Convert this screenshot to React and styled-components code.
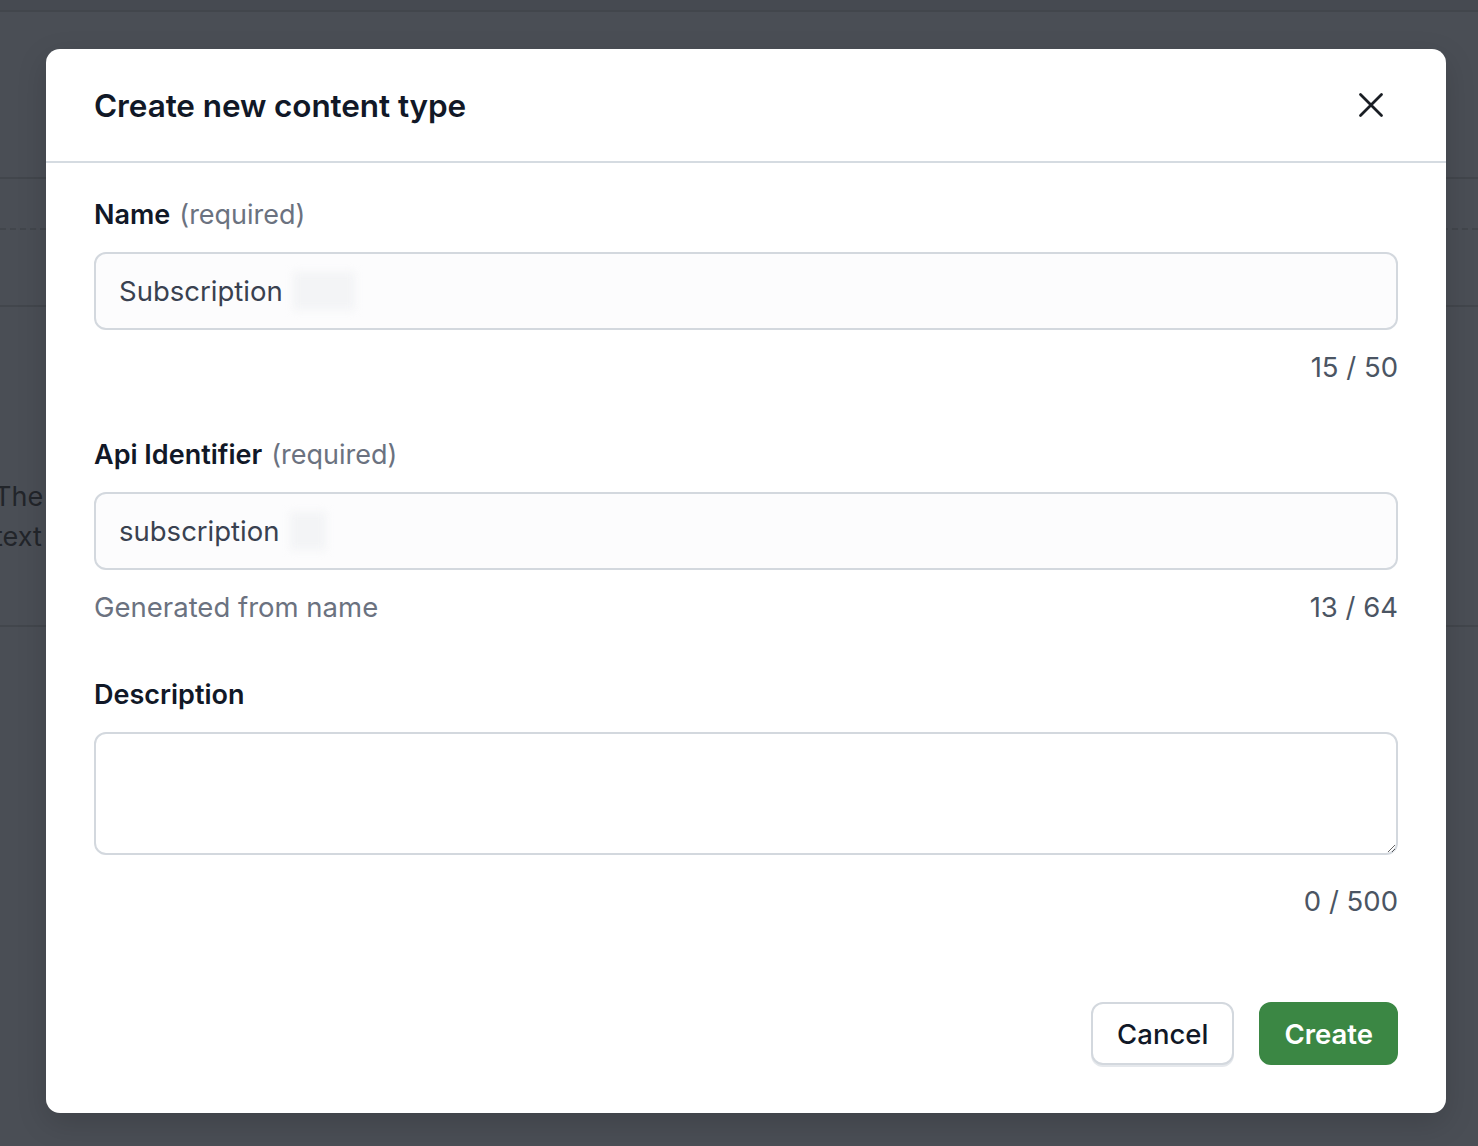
import React, { useState } from 'react';
import styled, { createGlobalStyle } from 'styled-components';

const GlobalStyle = createGlobalStyle`
  html, body {
    margin: 0;
    padding: 0;
    background: #4a4e55;
    font-family: Inter, "Noto Sans", "Liberation Sans", sans-serif;
    overflow: hidden;
  }
`;

const Backdrop = styled.div`
  position: relative;
  width: 1478px;
  height: 1146px;
  background: #4a4e55;
  overflow: hidden;
`;

const PageTop = styled.div`
  height: 10px;
  background: #464a51;
  border-bottom: 2px solid #42464c;
`;

const PageRow = styled.div`
  height: ${(p) => p.h}px;
  border-bottom: 2px ${(p) => (p.dashed ? 'dashed' : 'solid')} #42464c;
`;

const PageText = styled.div`
  height: ${(p) => p.h}px;
  box-sizing: border-box;
  padding-top: 170px;
  border-bottom: 2px solid #42464c;
  display: flex;
  flex-direction: column;
  margin-left: -6px;
  font-size: 27px;
  line-height: 40px;
  color: #22252a;
`;

const Modal = styled.div`
  position: absolute;
  left: 46px;
  top: 49px;
  width: 1400px;
  background: #ffffff;
  border-radius: 14px;
  overflow: hidden;
  box-shadow: 0 10px 30px rgba(0, 0, 0, 0.15);
`;

const Header = styled.div`
  height: 112px;
  display: flex;
  align-items: center;
  justify-content: space-between;
  padding: 0 48px;
  border-bottom: 2px solid #d5dbe1;
`;

const Title = styled.h2`
  margin: 0;
  font-size: 31.5px;
  font-weight: 600;
  color: #111827;
  letter-spacing: -0.1px;
`;

const CloseButton = styled.button`
  width: 40px;
  height: 40px;
  margin-right: 7px;
  border: none;
  background: transparent;
  display: flex;
  align-items: center;
  justify-content: center;
  padding: 0;
  cursor: pointer;
  color: #1a1e24;
`;

const Body = styled.div`
  padding: 34px 48px 48px;
  display: flex;
  flex-direction: column;
`;

const Field = styled.div`
  display: flex;
  flex-direction: column;
  margin-bottom: ${(p) => p.mb ?? 52}px;
`;

const Label = styled.label`
  font-size: 27px;
  line-height: 36px;
  font-weight: 600;
  color: #111827;
  margin-bottom: 19px;
`;

const Muted = styled.span`
  font-weight: 400;
  color: #6b7280;
  margin-left: 9px;
`;

const InputBox = styled.div`
  height: 74px;
  border: 2px solid #d3d8de;
  border-radius: 12px;
  background: #fcfcfd;
  display: flex;
  align-items: center;
  padding: 0 23px;
`;

const InputText = styled.span`
  font-size: 27.5px;
  color: #394150;
`;

const Redacted = styled.span`
  display: inline-block;
  width: ${(p) => p.w}px;
  height: 38px;
  margin-left: 10px;
  background: #f3f4f6;
  filter: blur(4px);
`;

const TextArea = styled.textarea`
  display: block;
  box-sizing: border-box;
  width: 100%;
  height: 123px;
  border: 2px solid #d3d8de;
  border-radius: 12px;
  background: #ffffff;
  resize: vertical;
  font-family: inherit;
  font-size: 27px;
  padding: 16px 23px;
  margin-bottom: 28px;
  outline: none;
`;

const HelpRow = styled.div`
  display: flex;
  justify-content: ${(p) => (p.split ? 'space-between' : 'flex-end')};
  margin-top: ${(p) => p.mt ?? 19}px;
  font-size: 27.5px;
  line-height: 36px;
  color: #6b7280;
`;

const Counter = styled.span`
  color: #4b5563;
`;

const Footer = styled.div`
  display: flex;
  justify-content: flex-end;
  gap: 25px;
  margin-top: 83px;
`;

const Button = styled.button`
  height: 63px;
  box-sizing: border-box;
  padding: 0 ${(p) => (p.primary ? 23 : 24)}px;
  border-radius: 12px;
  font-family: inherit;
  font-size: 27.5px;
  font-weight: ${(p) => (p.primary ? 600 : 500)};
  border: 2px solid ${(p) => (p.primary ? '#3b8744' : '#d3d8de')};
  background: ${(p) => (p.primary ? '#3b8744' : '#ffffff')};
  color: ${(p) => (p.primary ? '#ffffff' : '#111827')};
  box-shadow: ${(p) => (p.primary ? 'none' : '0 2px 0 #e5e8ec')};
  cursor: pointer;
`;

const CloseIcon = () => (
  <svg width="28" height="28" viewBox="0 0 24 24" fill="none" stroke="currentColor" strokeWidth="2.4" strokeLinecap="round">
    <path d="M3 3 L21 21 M21 3 L3 21" />
  </svg>
);

export default function App() {
  const [description, setDescription] = useState('');

  return (
    <>
      <GlobalStyle />
      <Backdrop>
        <PageTop />
        <PageRow h={165} />
        <PageRow h={49} dashed />
        <PageRow h={75} />
        <PageText h={320}>
          <span>The</span>
          <span>text</span>
        </PageText>

        <Modal>
          <Header>
            <Title>Create new content type</Title>
            <CloseButton aria-label="Close">
              <CloseIcon />
            </CloseButton>
          </Header>
          <Body>
            <Field>
              <Label>
                Name<Muted>(required)</Muted>
              </Label>
              <InputBox>
                <InputText>Subscription</InputText>
                <Redacted w={62} />
              </InputBox>
              <HelpRow>
                <Counter>15 / 50</Counter>
              </HelpRow>
            </Field>

            <Field>
              <Label>
                Api Identifier<Muted>(required)</Muted>
              </Label>
              <InputBox>
                <InputText>subscription</InputText>
                <Redacted w={36} />
              </InputBox>
              <HelpRow split>
                <span>Generated from name</span>
                <Counter>13 / 64</Counter>
              </HelpRow>
            </Field>

            <Field mb={0}>
              <Label>Description</Label>
              <TextArea value={description} onChange={(e) => setDescription(e.target.value)} />
              <HelpRow mt={0}>
                <Counter>{description.length} / 500</Counter>
              </HelpRow>
            </Field>

            <Footer>
              <Button>Cancel</Button>
              <Button primary>Create</Button>
            </Footer>
          </Body>
        </Modal>
      </Backdrop>
    </>
  );
}
